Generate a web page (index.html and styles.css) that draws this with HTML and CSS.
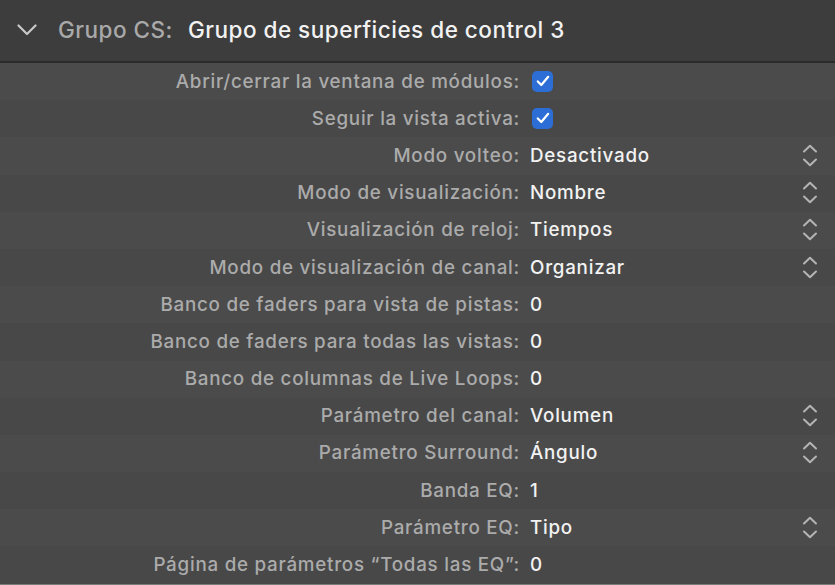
FILE: index.html
```html
<!DOCTYPE html>
<html lang="es">
<head>
    <meta charset="UTF-8">
    <meta name="viewport" content="width=device-width, initial-scale=1.0">
    <title>Grupo de superficies de control</title>
    <link rel="stylesheet" href="styles.css">
</head>
<body>

    <div class="group-header">
        <svg class="disclosure" width="20" height="12" viewBox="0 0 20 12">
            <path d="M1.5 1.5 L10 10 L18.5 1.5" fill="none" stroke="#c9c9c9" stroke-width="2.2" stroke-linecap="round" stroke-linejoin="round"/>
        </svg>
        <span class="group-label">Grupo CS:</span>
        <span class="group-name">Grupo de superficies de control 3</span>
    </div>

    <div class="params">
        <div class="row">
            <span class="label">Abrir/cerrar la ventana de módulos:</span>
            <span class="value"><span class="checkbox"><svg width="14" height="12" viewBox="0 0 14 12"><path d="M1.8 6.4 L5.3 10 L12.2 1.8" fill="none" stroke="#fff" stroke-width="2.2" stroke-linecap="round" stroke-linejoin="round"/></svg></span></span>
        </div>
        <div class="row">
            <span class="label">Seguir la vista activa:</span>
            <span class="value"><span class="checkbox"><svg width="14" height="12" viewBox="0 0 14 12"><path d="M1.8 6.4 L5.3 10 L12.2 1.8" fill="none" stroke="#fff" stroke-width="2.2" stroke-linecap="round" stroke-linejoin="round"/></svg></span></span>
        </div>
        <div class="row">
            <span class="label">Modo volteo:</span>
            <span class="value">Desactivado</span>
            <svg class="stepper" width="16" height="23" viewBox="0 0 16 23"><path d="M2 7.5 L8 1.8 L14 7.5 M2 15.5 L8 21.2 L14 15.5" fill="none" stroke="#b4b4b4" stroke-width="2" stroke-linecap="round" stroke-linejoin="round"/></svg>
        </div>
        <div class="row">
            <span class="label">Modo de visualización:</span>
            <span class="value">Nombre</span>
            <svg class="stepper" width="16" height="23" viewBox="0 0 16 23"><path d="M2 7.5 L8 1.8 L14 7.5 M2 15.5 L8 21.2 L14 15.5" fill="none" stroke="#b4b4b4" stroke-width="2" stroke-linecap="round" stroke-linejoin="round"/></svg>
        </div>
        <div class="row">
            <span class="label">Visualización de reloj:</span>
            <span class="value">Tiempos</span>
            <svg class="stepper" width="16" height="23" viewBox="0 0 16 23"><path d="M2 7.5 L8 1.8 L14 7.5 M2 15.5 L8 21.2 L14 15.5" fill="none" stroke="#b4b4b4" stroke-width="2" stroke-linecap="round" stroke-linejoin="round"/></svg>
        </div>
        <div class="row">
            <span class="label">Modo de visualización de canal:</span>
            <span class="value">Organizar</span>
            <svg class="stepper" width="16" height="23" viewBox="0 0 16 23"><path d="M2 7.5 L8 1.8 L14 7.5 M2 15.5 L8 21.2 L14 15.5" fill="none" stroke="#b4b4b4" stroke-width="2" stroke-linecap="round" stroke-linejoin="round"/></svg>
        </div>
        <div class="row">
            <span class="label">Banco de faders para vista de pistas:</span>
            <span class="value">0</span>
        </div>
        <div class="row">
            <span class="label">Banco de faders para todas las vistas:</span>
            <span class="value">0</span>
        </div>
        <div class="row">
            <span class="label">Banco de columnas de Live Loops:</span>
            <span class="value">0</span>
        </div>
        <div class="row">
            <span class="label">Parámetro del canal:</span>
            <span class="value">Volumen</span>
            <svg class="stepper" width="16" height="23" viewBox="0 0 16 23"><path d="M2 7.5 L8 1.8 L14 7.5 M2 15.5 L8 21.2 L14 15.5" fill="none" stroke="#b4b4b4" stroke-width="2" stroke-linecap="round" stroke-linejoin="round"/></svg>
        </div>
        <div class="row">
            <span class="label">Parámetro Surround:</span>
            <span class="value">Ángulo</span>
            <svg class="stepper" width="16" height="23" viewBox="0 0 16 23"><path d="M2 7.5 L8 1.8 L14 7.5 M2 15.5 L8 21.2 L14 15.5" fill="none" stroke="#b4b4b4" stroke-width="2" stroke-linecap="round" stroke-linejoin="round"/></svg>
        </div>
        <div class="row">
            <span class="label">Banda EQ:</span>
            <span class="value">1</span>
        </div>
        <div class="row">
            <span class="label">Parámetro EQ:</span>
            <span class="value">Tipo</span>
            <svg class="stepper" width="16" height="23" viewBox="0 0 16 23"><path d="M2 7.5 L8 1.8 L14 7.5 M2 15.5 L8 21.2 L14 15.5" fill="none" stroke="#b4b4b4" stroke-width="2" stroke-linecap="round" stroke-linejoin="round"/></svg>
        </div>
        <div class="row">
            <span class="label">Página de parámetros “Todas las EQ”:</span>
            <span class="value">0</span>
        </div>
    </div>

</body>
</html>
```

FILE: styles.css
```css
body {
    margin: 0;
    background: #4a4a4a;
    font-family: 'Inter', 'Roboto', sans-serif;
    overflow: hidden;
}

.group-header {
    height: 59px;
    padding-bottom: 2px;
    display: flex;
    align-items: center;
    background: #3d3d3d;
    border-bottom: 2px solid #2b2b2b;
    font-size: 22.5px;
    font-weight: 500;
    letter-spacing: 0.5px;
}

.disclosure {
    margin-left: 17px;
    margin-right: 21px;
}

.group-label {
    color: #a9a9a9;
    margin-right: 15px;
}

.group-name {
    color: #f2f2f2;
}

.params {
    border-bottom: 1px solid #7a7a7a;
}

.row {
    height: 37.2px;
    padding-bottom: 1px;
    box-sizing: border-box;
    display: flex;
    align-items: center;
    font-size: 18.8px;
    font-weight: 500;
    letter-spacing: 0.75px;
    background: #4b4b4b;
}

.row:nth-child(even) {
    background: #484848;
}

.label {
    width: 520px;
    text-align: right;
    color: #ababab;
    white-space: nowrap;
}

.value {
    margin-left: 10px;
    color: #f2f2f2;
    flex: 1;
    display: flex;
    align-items: center;
}

.checkbox {
    width: 21px;
    height: 21px;
    margin-left: 2px;
    border-radius: 5px;
    background: #2d6ed6;
    display: flex;
    align-items: center;
    justify-content: center;
}

.stepper {
    margin-right: 17px;
}
```
